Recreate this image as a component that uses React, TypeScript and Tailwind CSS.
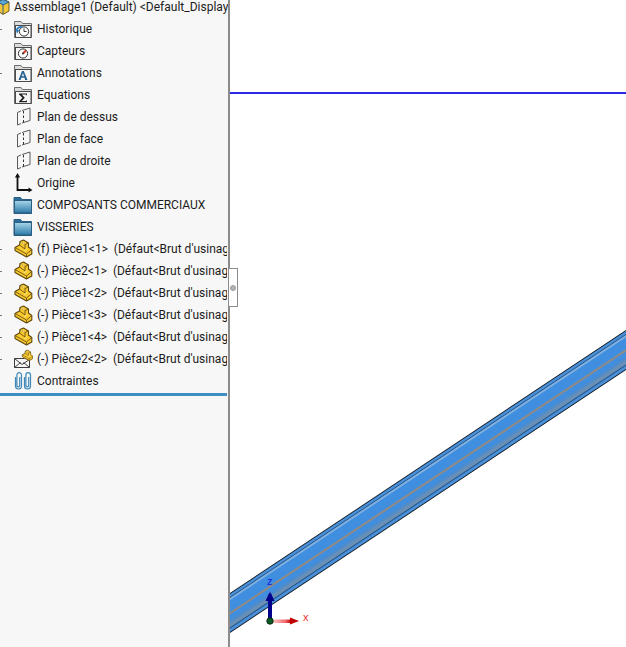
import React from "react";

const FolderOutline = ({ children }: { children: React.ReactNode }) => (
  <svg width="20" height="20" viewBox="0 0 20 20" className="shrink-0">
    <path d="M1.500 18.500V2.500h6.500l1.500 2h9v14z" fill="#dcdcdc" stroke="#6e6e6e" />
    <rect x="2.500" y="6.500" width="15.500" height="12" fill="#f6f6f6" stroke="#4a4a4a" />
    {children}
  </svg>
);

const Historique = () => (
  <FolderOutline>
    <circle cx="11" cy="12.500" r="4.600" fill="#fff" stroke="#333" />
    <path d="M11 9.500V12.500h2.500" fill="none" stroke="#333" />
    <path d="M3.500 12a4.500 4.500 0 0 1 6-3.800" fill="none" stroke="#2f7fc1" strokeWidth="1.800" />
    <path d="M2.500 10.500l1.500 4 2.500-3z" fill="#2f7fc1" />
  </FolderOutline>
);
const Capteurs = () => (
  <FolderOutline>
    <circle cx="10" cy="12.500" r="4.600" fill="#fff" stroke="#333" />
    <path d="M10 12.500l3-3" stroke="#d8361f" strokeWidth="2" />
    <circle cx="10" cy="12.500" r="1" fill="#333" />
  </FolderOutline>
);
const Annotations = () => (
  <FolderOutline>
    <path d="M5.500 17l3.500-9h1.800L14.500 17h-2.400l-.6-2.200H8.300L7.700 17zM8.900 13.300h2.100L10 10z" fill="#27608f" />
  </FolderOutline>
);
const Equations = () => (
  <FolderOutline>
    <path d="M6 8.500h8v2.200l-1-1.100H8.800l3 3.200-3 3.200H13l1-1.100v2.400H6v-.9l3.400-3.600L6 9.400z" fill="#222" />
  </FolderOutline>
);
const Plane = () => (
  <svg width="20" height="20" viewBox="0 0 20 20" className="shrink-0">
    <path d="M9 3.500L17 1V13.500L9 16M8 16.500L4.500 18V5.500L8 4" fill="none" stroke="#5a5a5a" />
    <path d="M10.500 4v12" stroke="#333" strokeDasharray="2.500 2" />
  </svg>
);
const Origin = () => (
  <svg width="20" height="20" viewBox="0 0 20 20" className="shrink-0">
    <path d="M4.500 2.500V17H18" fill="none" stroke="#111" strokeWidth="1.800" />
    <path d="M4.500 0l-2.600 4.500h5.200zM19.500 17l-4-2.400v4.800z" fill="#111" />
  </svg>
);
const BlueFolder = () => (
  <svg width="20" height="20" viewBox="0 0 20 20" className="shrink-0">
    <defs>
      <linearGradient id="bf" x1="0" y1="0" x2="0" y2="1">
        <stop offset="0" stopColor="#a9d6ea" />
        <stop offset="1" stopColor="#2b7aa8" />
      </linearGradient>
    </defs>
    <path d="M1 18.500V2.500h6.500l1.500 2h9.500v14z" fill="#2a6f9c" stroke="#2a5d80" />
    <rect x="1.500" y="5.500" width="17" height="12.500" fill="url(#bf)" stroke="#2a5d80" />
  </svg>
);
const Block = ({ s = 1, x = 0, y = 0 }: { s?: number; x?: number; y?: number }) => (
  <g transform={`translate(${x} ${y}) scale(${s})`} strokeLinejoin="round">
    <path d="M2 8.500L6.500 6 7 2.500 10.500 1 15.500 4V8L18.800 10.500V15L13.500 18 2 11.500z" fill="#f7c92e" stroke="#5f470c" strokeWidth="1.100" />
    <path d="M7 2.500L12 5.500 15.500 4M12 5.500V10L6.500 6M2 8.500L13.500 15V18M13.500 15L18.800 10.500" fill="none" stroke="#6e5210" strokeWidth="0.900" />
    <path d="M8 3l3.800 2.200M14 9.500l-3 2.500" fill="none" stroke="#fff0a6" strokeWidth="0.800" />
  </g>
);
const Part = () => (
  <svg width="20" height="20" viewBox="0 0 20 20" className="shrink-0">
    <Block />
  </svg>
);
const MailPart = () => (
  <svg width="20" height="20" viewBox="0 0 20 20" className="shrink-0">
    <path d="M1.500 9.500h10l5 1v8h-15z" fill="#f6f6f6" stroke="#3c3c3c" />
    <path d="M1.500 18.500l6-5M16.500 18.500l-6-5M1.500 9.500l7.500 6 7.500-5" fill="none" stroke="#3c3c3c" />
    <Block s={0.62} x={8} y={0.500} />
  </svg>
);
const Clips = () => (
  <svg width="20" height="20" viewBox="0 0 20 20" className="shrink-0">
    <g fill="none" stroke="#3f88b8" strokeWidth="1.200">
      <path d="M2.500 6v9a3 3 0 0 0 6 0V4a2.300 2.300 0 0 0-4.600 0v10.500a1.200 1.200 0 0 0 2.800 0V6" />
      <path d="M11.500 6v9a3 3 0 0 0 6 0V4a2.300 2.300 0 0 0-4.600 0v10.500a1.200 1.200 0 0 0 2.800 0V6" />
    </g>
  </svg>
);
const RootIcon = () => (
  <svg width="11" height="18" viewBox="0 0 11 18" className="shrink-0">
    <path d="M-2 4l5-2.500 6 2.500v9l-6 3.500-5-3.500z" fill="#f3c63a" stroke="#6b5a1c" />
    <path d="M-2 4l5 3 6-3-6-2.500z" fill="#5aa7d8" stroke="#2e5f85" />
    <path d="M3 7v9" stroke="#2e5f85" />
  </svg>
);

const rows: { icon: React.ReactNode; label: string; tick?: boolean }[] = [
  { icon: <Historique />, label: "Historique", tick: true },
  { icon: <Capteurs />, label: "Capteurs" },
  { icon: <Annotations />, label: "Annotations", tick: true },
  { icon: <Equations />, label: "Equations" },
  { icon: <Plane />, label: "Plan de dessus" },
  { icon: <Plane />, label: "Plan de face" },
  { icon: <Plane />, label: "Plan de droite" },
  { icon: <Origin />, label: "Origine" },
  { icon: <BlueFolder />, label: "COMPOSANTS COMMERCIAUX" },
  { icon: <BlueFolder />, label: "VISSERIES" },
  { icon: <Part />, label: "(f) Pièce1<1>  (Défaut<Brut d'usinage", tick: true },
  { icon: <Part />, label: "(-) Pièce2<1>  (Défaut<Brut d'usinage", tick: true },
  { icon: <Part />, label: "(-) Pièce1<2>  (Défaut<Brut d'usinage", tick: true },
  { icon: <Part />, label: "(-) Pièce1<3>  (Défaut<Brut d'usinage", tick: true },
  { icon: <Part />, label: "(-) Pièce1<4>  (Défaut<Brut d'usinage", tick: true },
  { icon: <MailPart />, label: "(-) Pièce2<2>  (Défaut<Brut d'usinage", tick: true },
  { icon: <Clips />, label: "Contraintes" },
];

const band = (d0: number, d1: number) =>
  `230,${593 + d0} 626,${330 + d0} 626,${330 + d1} 230,${593 + d1}`;

const Scene = () => (
  <svg className="w-full h-full block" viewBox="0 0 396 647" preserveAspectRatio="none">
    <defs>
      <linearGradient id="zarrow" x1="0" y1="0" x2="0" y2="1">
        <stop offset="0" stopColor="#7a7ae0" />
        <stop offset="0.3" stopColor="#00008c" />
      </linearGradient>
      <linearGradient id="xarrow" x1="0" y1="0" x2="1" y2="0">
        <stop offset="0" stopColor="#ffd0d0" />
        <stop offset="0.7" stopColor="#f06a6a" />
        <stop offset="1" stopColor="#c00000" />
      </linearGradient>
    </defs>
    <rect x="0" y="92" width="396" height="2" fill="#2a2ae6" />
    <g transform="translate(-230 0)">
      <polygon points={band(0, 40)} fill="#0c1218" />
      <polygon points={band(1, 39)} fill="#4a90d8" />
      <polygon points={band(4, 5)} fill="#1d4a7a" />
      <polygon points={band(5, 7.500)} fill="#7fb0e0" />
      <polygon points={band(7.500, 27)} fill="#3f8ee0" />
      <polygon points={band(19, 21.500)} fill="#8f8a86" />
      <polygon points={band(27, 30)} fill="#4f8ccb" />
      <polygon points={band(30, 34.500)} fill="#6a8fb5" />
      <polygon points={band(34.500, 35.500)} fill="#1d4a7a" />
    </g>
    <g transform="translate(-230 0)">
      <path d="M272 619.500h19v3.500h-19z" fill="url(#xarrow)" />
      <path d="M299 621l-9-3.500v7z" fill="#c00000" />
      <rect x="268" y="598" width="4" height="22" fill="#00008c" />
      <path d="M270 591l-4.500 10h9z" fill="url(#zarrow)" />
      <circle cx="270" cy="621" r="3.200" fill="#0d5a22" stroke="#0a2a10" />
      <text x="267" y="585" fontSize="11" fill="#1a1ae0" fontFamily="'Liberation Sans', sans-serif">z</text>
      <text x="303" y="621" fontSize="11" fill="#e8302a" fontFamily="'Liberation Sans', sans-serif">x</text>
    </g>
  </svg>
);

export default function App() {
  return (
    <div className="relative flex w-[626px] h-[647px] overflow-hidden bg-white text-[12px] text-[#1c1c1c] font-['Roboto','Noto_Sans',sans-serif]">
      <aside className="w-[230px] shrink-0 bg-[#f7f7f7] border-r-2 border-[#8c8c8c] overflow-hidden">
        <div className="flex items-center h-[18px] pb-1 whitespace-nowrap">
          <RootIcon />
          <span className="ml-[3px]">Assemblage1 (Default) &lt;Default_Display</span>
        </div>
        <ul className="w-[227px] overflow-hidden">
          {rows.map((r) => (
            <li key={r.label} className="relative flex items-center h-[22px] pl-[13px] whitespace-pre">
              {r.tick && <span className="absolute left-0 top-[11px] w-[2px] h-px bg-[#777]" />}
              {r.icon}
              <span className="ml-1">{r.label}</span>
            </li>
          ))}
        </ul>
        <div className="w-[227px] h-[3px] mt-[1px] bg-[#3d8fc4]" />
      </aside>
      <main className="flex-1 min-w-0">
        <Scene />
      </main>
      <div className="absolute left-[229px] top-[268px] w-[9px] h-[39px] bg-white border border-l-0 border-[#8c8c8c] flex items-center justify-center">
        <span className="w-[6px] h-[6px] rounded-full bg-[#b5b5b5] border border-[#999]" />
      </div>
    </div>
  );
}
